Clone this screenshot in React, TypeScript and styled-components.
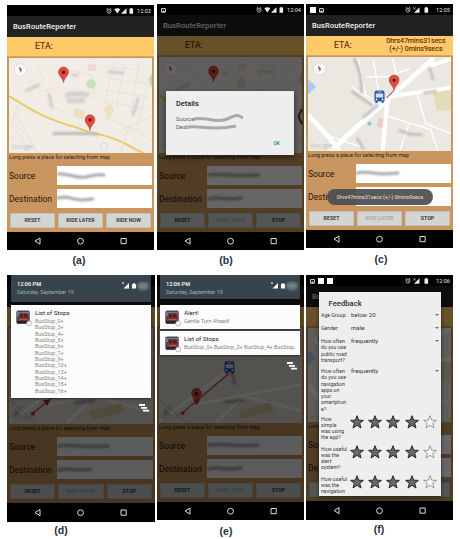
import React from 'react';
import styled, { createGlobalStyle } from 'styled-components';

const GlobalStyle = createGlobalStyle`
  * { box-sizing: border-box; }
  body { margin: 0; background: #fff; font-family: Roboto, "Liberation Sans", sans-serif; }
`;

const Board = styled.main`
  width: 460px;
  height: 539px;
  padding: 4px 0 0 7px;
  display: grid;
  grid-template-columns: 150px 149px 148px;
  grid-template-rows: 271px 264px;
  overflow: hidden;
`;
const Figure = styled.figure<{ $top?: number }>`
  margin: 0;
  padding-top: ${p => p.$top ?? 0}px;
`;
const Caption = styled.figcaption<{ $center: number; $gap: number }>`
  width: ${p => p.$center * 2}px;
  margin-top: ${p => p.$gap}px;
  text-align: center;
  font: bold 10.5px/12px "Liberation Sans", sans-serif;
  color: #26303e;
`;
const Screen = styled.div<{ $h: number; $w?: number }>`
  position: relative;
  display: flex;
  flex-direction: column;
  width: ${p => p.$w ?? 147}px;
  height: ${p => p.$h}px;
  background: #ca965f;
  overflow: hidden;
`;
const StatusBar = styled.div<{ $hidden?: boolean }>`
  height: 11px;
  flex: none;
  display: flex;
  align-items: center;
  gap: 3px;
  padding: 1px 3px 0 4px;
  background: #000;
  color: #e2e2e2;
  font-size: 5.6px;
  & > * { visibility: ${p => (p.$hidden ? 'hidden' : 'visible')}; }
`;
const Spacer = styled.span`flex: 1;`;
const Square = styled.span`width: 6px; height: 6px; background: #fff;`;
const TitleBar = styled.div`
  height: 21px;
  flex: none;
  padding-left: 6px;
  background: #222;
  color: #f2f2f2;
  font-size: 7.5px;
  font-weight: 500;
  line-height: 21px;
  letter-spacing: 0.1px;
`;
const EtaBar = styled.div`
  height: 19.5px;
  flex: none;
  display: flex;
  align-items: center;
  padding-left: 28px;
  background: #ffca67;
  border-bottom: 1px solid #d8a55c;
  color: #6b2b14;
  font-size: 8.8px;
  -webkit-text-stroke: 0.15px #6b2b14;
`;
const EtaValue = styled.div`
  flex: 1;
  padding-left: 27px;
  text-align: center;
  font-size: 7px;
  line-height: 8px;
  white-space: nowrap;
`;
const MapFrame = styled.div`
  flex: 1;
  min-height: 0;
  margin: 1.5px 2px 0;
  overflow: hidden;
  svg { display: block; width: 100%; height: 100%; }
`;
const Hint = styled.div`
  height: 13px;
  flex: none;
  padding: 1px 0 0 2px;
  font-size: 5.4px;
  line-height: 7px;
  white-space: nowrap;
  color: #2a1d12;
`;
const Field = styled.div`
  height: 19px;
  flex: none;
  margin: 0 2px 4px;
  display: grid;
  grid-template-columns: 48px 1fr;
  align-items: center;
  color: #1d1712;
  font-size: 8.5px;
`;
const Input = styled.div`
  height: 19px;
  background: #fff;
  svg { display: block; }
`;
const Buttons = styled.div`
  height: 15px;
  flex: none;
  margin: 1px 3px 4px;
  display: grid;
  grid-template-columns: repeat(3, 1fr);
  gap: 3px;
`;
const Button = styled.div<{ $off?: boolean }>`
  background: #d3d5d5;
  border: 1px solid #c6c1b8;
  border-radius: 1px;
  color: ${p => (p.$off ? '#a3a5a5' : '#222')};
  font-size: 5.3px;
  font-weight: 500;
  line-height: 13px;
  text-align: center;
`;
const NavBar = styled.div<{ $h: number }>`
  height: ${p => p.$h}px;
  flex: none;
  background: #000;
  svg { display: block; height: 100%; }
`;
const NavSvg = styled.svg`fill: none; stroke: #ddd; stroke-width: 1;`;
const Dim = styled.div<{ $bottom: number; $top: number; $alpha: number }>`
  position: absolute;
  inset: ${p => p.$top}px 0 ${p => p.$bottom}px;
  background: rgba(0, 0, 0, ${p => p.$alpha});
`;
const Dialog = styled.div`
  position: absolute;
  top: 87px;
  left: 9px;
  width: 128px;
  height: 64px;
  padding: 8px 10px;
  background: #eee;
  box-shadow: 0 2px 5px rgba(0, 0, 0, 0.5);
  color: #555;
  font-size: 5.8px;
  line-height: 7px;
`;
const DialogTitle = styled.div`
  margin-bottom: 8px;
  color: #222;
  font-size: 7.4px;
  font-weight: 500;
  line-height: 9px;
`;
const DialogRow = styled.div`
  display: flex;
  height: 7.5px;
  svg { display: block; margin-left: -3px; overflow: visible; }
`;
const DialogAction = styled.div`
  padding: 9px 4px 0;
  text-align: right;
  color: #139180;
  font-size: 5px;
  font-weight: 500;
`;
const Drawer = styled.div`
  position: absolute;
  right: 1px;
  top: 104px;
  svg { display: block; }
`;
const Toast = styled.div`
  position: absolute;
  left: 21px;
  top: 185px;
  width: 106px;
  height: 16px;
  border-radius: 8px;
  background: rgba(80, 80, 80, 0.94);
  color: #e4e4e4;
  font-size: 5.3px;
  line-height: 16px;
  text-align: center;
  white-space: nowrap;
`;
const Shade = styled.div<{ $left: number }>`
  position: absolute;
  top: 0;
  left: ${p => p.$left}px;
  width: 140px;
  display: flex;
  flex-direction: column;
`;
const ShadeHead = styled.div<{ $h: number }>`
  height: ${p => p.$h}px;
  margin-bottom: ${p => 30 - p.$h}px;
  padding: 5px 1px 0 6px;
  display: flex;
  justify-content: space-between;
  align-items: flex-start;
  background: #37444c;
  color: #a2acb1;
  font-size: 5.4px;
  line-height: 8px;
  svg { margin-top: 1px; }
`;
const Clock = styled.div`color: #fff; font-size: 5.6px; font-weight: 500;`;
const Card = styled.section<{ $h: number }>`
  height: ${p => p.$h}px;
  margin-bottom: 2px;
  padding: 5px 5px 0;
  display: grid;
  grid-template-columns: 19px 1fr;
  background: #fcfcfc;
  box-shadow: 0 1px 2px rgba(0, 0, 0, 0.5);
`;
const CardTitle = styled.div`
  margin-bottom: 1px;
  color: #222;
  font-size: 6.2px;
  line-height: 7px;
`;
const CardText = styled.div`
  color: #858585;
  font-size: 5.4px;
  line-height: 6.35px;
  white-space: nowrap;
`;
const ClearAll = styled.div<{ $top: number; $left: number }>`
  position: absolute;
  top: ${p => p.$top}px;
  left: ${p => p.$left}px;
  svg { display: block; }
`;
const Feedback = styled.div`
  position: absolute;
  left: 13px;
  top: 17px;
  width: 122px;
  height: 204px;
  padding: 6px 2px 0;
  background: #eee;
  box-shadow: 0 1px 4px rgba(0, 0, 0, 0.6);
  overflow: hidden;
`;
const FeedbackTitle = styled.h2`
  margin: 0 0 2px 7.5px;
  color: #2d2d2d;
  font-size: 7.7px;
  font-weight: 500;
  line-height: 12px;
`;
const Question = styled.div<{ $h: number }>`
  height: ${p => p.$h}px;
  display: grid;
  grid-template-columns: 30px 80px 1fr;
  color: #3a3a3a;
  font-size: 5.2px;
  line-height: 6.3px;
  white-space: nowrap;
`;
const Rating = styled.div`
  grid-column: 2 / 4;
  display: flex;
  gap: 4.2px;
  margin: -1px 0 0 -1px;
`;
const Answer = styled.div`color: #333; font-size: 6.1px;`;
const Caret = styled.div`
  width: 0;
  height: 0;
  margin: 2px 0 0 4px;
  border: 2px solid transparent;
  border-top: 2.5px solid #6d6d6d;
`;
const Soft = styled.g`filter: blur(0.8px);`;
const Haze = styled.g`filter: blur(1.1px);`;

const Smudge = ({ v = 0 }: { v?: number }) => (
  <svg width="94" height="19">
    <Soft fill="none" stroke="#a8a8a8" strokeLinecap="round">
      {v === 0 && <path d="M1 8C14 7 18 13 29 11S40 8 47 9" strokeWidth="3" />}
      {v === 1 && <path d="M1 9C12 6 17 12 26 11S32 10 36 10" strokeWidth="3" />}
      {v === 2 && <path d="M2 9C17 7 30 11 51 9" strokeWidth="3.5" />}
      {v === 3 && <path d="M2 10C12 7 20 12 34 9" strokeWidth="3.5" />}
      {v === 4 && <path d="M1 9C15 6 20 12 42 9" strokeWidth="3" />}
    </Soft>
  </svg>
);

const SignalIcons = ({ wifi = true }: { wifi?: boolean }) => (
  <svg width="29" height="8" viewBox="0 0 29 8">
    <circle cx="4" cy="4.2" r="2" fill="none" stroke="#ccc" strokeWidth=".8" />
    <path d="M1.5 2.3 3 1M5 1l1.5 1.3M4 3v1.4h1" fill="none" stroke="#ccc" strokeWidth=".7" />
    {wifi ? <path d="M9.3 2.2q3-2 6 0l-3 4.2z" fill="#eee" /> : <path d="M9.5 1.4l2 2m0-2-2 2" stroke="#ddd" strokeWidth=".8" />}
    <path d={wifi ? 'M21.5 1.2v5.5H16z' : 'M15.5 1.2v5.5H10z'} fill="#eee" />
    <path d={wifi ? 'M24.5 1.8h1V1h1.6v.8h1v5h-3.6z' : 'M20.5 1.8h1V1h1.6v.8h1v5h-3.6z'} fill="#eee" />
  </svg>
);
const Picture = () => (
  <svg width="5" height="5"><path d="M.6.6h3.8v3.6H.6z" fill="none" stroke="#ddd" /><path d="M1 4 2.5 2.3 4 4z" fill="#ddd" /></svg>
);
const Pin = ({ x, y }: { x: number; y: number }) => (
  <g transform={`translate(${x} ${y})`}>
    <path d="M0 0C-.4-5-5-7-5-11A5 5 0 0 1 5-11C5-7 .4-5 0 0Z" fill="#e04b3f" stroke="#b83b31" strokeWidth=".5" />
    <circle cy="-10.8" r="1.7" fill="#5a1512" />
  </g>
);
const Bus = ({ x, y }: { x: number; y: number }) => (
  <g transform={`translate(${x} ${y})`}>
    <path d="M-5-4Q-5-6.3-2.5-6.3h5Q5-6.3 5-4V4.6H4V6.3H2V4.6h-4v1.7h-2V4.6h-1z" fill="#2456a8" />
    <path d="M-3.7-3.4h7.4V.7h-7.4zM-2-5.3h4v.8h-4z" fill="#d6e2f2" />
    <circle cx="-3" cy="2.7" r=".9" fill="#fff" /><circle cx="3" cy="2.7" r=".9" fill="#fff" />
  </g>
);
const Compass = () => (
  <g>
    <circle cx="11.5" cy="12" r="6.3" fill="#faf9f7" stroke="#d5d0ca" strokeWidth=".7" />
    <path d="M10.2 9.5 12.8 12 11.8 15z" fill="#777" /><path d="M10.2 8.5 13 11.6 10.5 12.5z" fill="#c9473f" />
  </g>
);
const Google = () => (
  <text x="2" y="91" fontSize="7" fill="#fff" stroke="#aaa" strokeWidth=".25" fontFamily="Roboto, sans-serif">Google</text>
);

const WideMap = () => (
  <svg viewBox="0 0 143 95.5" preserveAspectRatio="none">
    <rect width="143" height="96" fill="#f1ece5" />
    <g stroke="#dedbd7" strokeWidth=".6" fill="none">
      <path d="M0 63 22 95M4 52l11 18 13 25M0 78l30 17M10 46l-7 18 12 10M95 8l34 4 14 12M100 20l38 6M96 32l43 7M92 43l48 9M104 4 96 46M116 7l-9 42M130 5l-8 49M140 22l-13 52M95 60l24 9 24-10M100 82l20-14 23 16M112 95l8-26 13 26M28 7l8 17M20 24l12 9 20-4M36 45l18 9M58 12l24 5 4 22" />
    </g>
    <path d="M66 50l11 3-3 9-10-3zM94 51l7-6 4 7-5 9z" fill="#eee0c2" />
    <path d="M79 6h8v7h-8z" fill="#eed8d3" />
    <circle cx="82" cy="26" r="4.8" fill="#c9e2bd" /><path d="M143 15q-5 7 0 15z" fill="#b7d9a8" />
    <path d="M0 38Q30 58 52 65T79 74Q103 79 116 86T135 96" fill="none" stroke="#e9cb64" strokeWidth="2" />
    <Haze stroke="#b9b9b6" strokeLinecap="round">
      <path d="M58 37q9-2 20 0M60 43h14" strokeWidth="5" opacity=".55" fill="none" />
      <path d="M43 49l-3-12M124 57l5-16M17 33l13-6M99 14l15 1M64 17h4" strokeWidth="2.5" opacity=".7" />
      <path d="M45 76h36l7 1" strokeWidth="3" fill="none" />
    </Haze>
    <circle cx="95" cy="89" r="4" fill="none" stroke="#c6c3c0" strokeWidth=".5" />
    <Compass /><Google /><Pin x={54.5} y={25} /><Pin x={81} y={73} />
  </svg>
);
const CloseMap = () => (
  <svg viewBox="0 0 142 94.5" preserveAspectRatio="none">
    <rect width="142" height="95" fill="#ebe8e1" />
    <path d="M0 22l8 8-8 8z" fill="#abc9f3" />
    <path d="M124 36l18-3v21h-14z" fill="#e4dcb8" /><path d="M70 61l8 2-2 9-8-2z" fill="#e7cfca" />
    <g stroke="#fff" fill="none">
      <path d="M22 95 50 69 123 3V0M0 58 22 82 31 95" strokeWidth="5" />
      <path d="M78 40 142 31M119 10l23-8M79 42 74 95" strokeWidth="4" />
      <path d="M50 2 57 38l15 10M44 30l22 18M57 20h20l24-8M65 3l5 32M84 1l4 18M109 39l8 28 25 10M80 60l42 13 7 22M100 68l-9 27M17 78l35 12" strokeWidth="1.3" />
    </g>
    <Haze stroke="#aaa7a2" strokeLinecap="round" fill="none">
      <path d="M46 2q8 16 7 33M44 35l19 13M121 11l3 11M115 36l12-2M91 74q12 5 22 4M49 82l6 10M55 61l14-12" strokeWidth="2.4" opacity=".75" />
    </Haze>
    <circle cx="61" cy="67" r="2" fill="#84c5dc" />
    <path d="M85 34 78 41" stroke="#b44b54" />
    <Compass /><Google /><Pin x={85.5} y={34} /><Bus x={71} y={40} />
  </svg>
);
const RouteMap = ({ right = false }: { right?: boolean }) => (
  <svg viewBox="0 0 143 96" preserveAspectRatio="none">
    <rect width="143" height="96" fill="#e5e2db" />
    <g stroke="#f8f8f8" strokeWidth="3" fill="none">
      <path d="M0 95 37 67 77 37M37 77 143 57M57 95 85 69 143 84" />
      <path d="M0 50l30 30 40 15M98 27l-9 46M103 30v30M118 29l5 28M90 43l52 8M15 35l22 35" strokeWidth="1" opacity=".6" />
    </g>
    <path d="M80 83l31-8 4 9-33 8z" fill="#dcce9f" />
    <path d="M0 72l27 23M6 80v12M13 77l-9 15" stroke="#aaa69f" strokeWidth=".7" />
    <Haze stroke="#9c9993" strokeWidth="2.5"><path d="M65 75l20-2M73 45l3 12M6 84l4 5" /></Haze>
    <path d="M70 46 23 86" stroke="#c72f59" strokeWidth="1.1" /><circle cx="23.5" cy="86" r="2" fill="#d7194a" />
    <path d="M34 72h7l-3 6z" fill="#b71e3b" />
    <Google />
    {right && <><Pin x={37.5} y={77} /><Bus x={70.5} y={40} /></>}
  </svg>
);

const NavIcons = () => (
  <NavSvg viewBox="0 0 147 18" preserveAspectRatio="xMidYMid meet" width="147">
    <path d="M28 9 33 6v6.2zM114 6.5h5.2v5.2H114z" /><circle cx="73.5" cy="9.2" r="2.9" />
  </NavSvg>
);

type PhoneProps = {
  h: number; w?: number; nav?: number; time: string; map: React.ReactNode;
  active?: boolean; value?: React.ReactNode; icons?: React.ReactNode; wifi?: boolean;
  noStatus?: boolean; smudges?: [number, number]; children?: React.ReactNode;
};
const Phone = ({ h, w, nav = 18, time, map, active, value, icons, wifi, noStatus, smudges = [0, 1], children }: PhoneProps) => (
  <Screen $h={h} $w={w}>
    <StatusBar $hidden={noStatus}>{icons}<Spacer />{!noStatus && <><SignalIcons wifi={wifi} />{time}</>}</StatusBar>
    <TitleBar>{!noStatus && 'BusRouteReporter'}</TitleBar>
    <EtaBar>{!noStatus && 'ETA:'}{value && <EtaValue>{value}</EtaValue>}</EtaBar>
    <MapFrame>{map}</MapFrame>
    <Hint>Long press a place for selecting from map</Hint>
    <Field>Source<Input><Smudge v={smudges[0]} /></Input></Field>
    <Field>Destination<Input><Smudge v={smudges[1]} /></Input></Field>
    <Buttons>
      <Button>RESET</Button>
      <Button $off={active}>RIDE LATER</Button>
      <Button>{active ? 'STOP' : 'RIDE NOW'}</Button>
    </Buttons>
    <NavBar $h={nav}><NavIcons /></NavBar>
    {children}
  </Screen>
);

const ShadeBlur = styled.ellipse`filter: blur(1.4px);`;
const ShadeSignal = () => (
  <svg width="29" height="11" viewBox="0 0 29 11">
    <path d="M1 1l2 2m0-2L1 3" stroke="#ddd" strokeWidth=".7" /><path d="M8 2v5.5H2.5zM11 3h1v-.8h2V3h1v4.5h-4z" fill="#fff" />
    <ShadeBlur cx="22" cy="5" rx="6" ry="4" fill="#728087" />
  </svg>
);
const BusPhoto = () => (
  <svg width="17" height="17" viewBox="0 0 17 17">
    <rect x=".3" y=".5" width="13.5" height="13.5" rx="2" fill="#424b57" />
    <path d="M1 2h12v4H1z" fill="#71808c" /><rect x="3" y="3" width="9.5" height="9" rx="1" fill="#8c2c2d" />
    <path d="M4 4.2h3v3H4zM8 4.2h3.5v3H8z" fill="#302b35" /><path d="M3.5 9h8v1h-8z" fill="#b9584e" />
    <path d="M1 12h12" stroke="#20262f" strokeWidth="2" /><circle cx="13.2" cy="13.4" r="2.5" fill="#fff" stroke="#999" strokeWidth=".7" />
  </svg>
);
const ClearIcon = () => (
  <svg width="10" height="8"><path d="M0 1h6M2 3.8h6M4 6.6h6" stroke="#fff" strokeWidth="1.8" /></svg>
);
const Star = ({ on }: { on: boolean }) => (
  <svg width="14" height="14" viewBox="0 0 14 14">
    <path d="M7 .7 8.7 5.2 13.4 5.4 9.7 8.3 11 13 7 10.3 3 13 4.3 8.3.6 5.4 5.3 5.2Z" fill={on ? '#696969' : '#f5f5f5'} stroke={on ? '#262626' : '#777'} strokeWidth={on ? 1 : 0.7} />
  </svg>
);
const Stars = () => <Rating>{[0, 1, 2, 3, 4].map(i => <Star key={i} on={i < 4} />)}</Rating>;
const Lines = ({ items }: { items: string[] }) => <div>{items.map(t => <div key={t}>{t}</div>)}</div>;
const ShadeTop = ({ h }: { h: number }) => (
  <ShadeHead $h={h}><div><Clock>12:06 PM</Clock>Saturday, September 19</div><ShadeSignal /></ShadeHead>
);
const Scribble = styled.path`
  fill: none;
  stroke: #aaa;
  stroke-width: 3;
  filter: blur(0.6px);
`;

const stops = [0, 3, 4, 5, 6, 7, 9, 10, 13, 14, 15, 16];
const dropdowns = [
  { h: 13, label: ['Age Group:'], answer: 'below 20' },
  { h: 13, label: ['Gender:'], answer: 'male' },
  { h: 30, label: ['How often', 'do you use', 'public road', 'transport?'], answer: 'frequently' },
  { h: 47.5, label: ['How often', 'do you use', 'navigation', 'apps on', 'your', 'smartphon', 'e?'], answer: 'frequently' },
];
const ratings = [
  ['How', 'simple', 'was using', 'the app?'],
  ['How useful', 'was the', 'alert', 'system?'],
  ['How useful', 'was the', 'navigation'],
];

export default function App() {
  return (
    <>
      <GlobalStyle />
      <Board>
        <Figure $top={1}>
          <Phone h={245} time="12:03" map={<WideMap />} />
          <Caption $center={72} $gap={4}>(a)</Caption>
        </Figure>
        <Figure>
          <Phone h={246} time="12:04" map={<WideMap />} active icons={<Picture />} smudges={[2, 3]}>
            <Dim $top={11} $bottom={18} $alpha={0.6} />
            <Drawer><svg width="6" height="17"><path d="M5 1 1.5 8.5 5 16" fill="none" stroke="#1c1c1c" strokeWidth="2" /></svg></Drawer>
            <Dialog>
              <DialogTitle>Details</DialogTitle>
              <DialogRow>Source:<svg width="54" height="7"><Scribble d="M2 3C15 0 23 8 35 3S45-1 51 2" /></svg></DialogRow>
              <DialogRow>Dest:<svg width="54" height="7"><Scribble d="M2 3C13 1 25 7 50 2" /></svg></DialogRow>
              <DialogAction>OK</DialogAction>
            </Dialog>
          </Phone>
          <Caption $center={69} $gap={4}>(b)</Caption>
        </Figure>
        <Figure>
          <Phone h={244} time="12:05" map={<CloseMap />} active wifi={false} icons={<><Square /><Picture /></>} smudges={[4, 1]}
            value={<>0hrs47mins31secs<br />(+/-) 0mins9secs</>}>
            <Toast>0hrs47mins31secs (+/-) 0mins9secs</Toast>
          </Phone>
          <Caption $center={75} $gap={5}>(c)</Caption>
        </Figure>
        <Figure>
          <Phone h={247} w={148} nav={19} time="12:06" map={<RouteMap />} active noStatus smudges={[2, 3]}>
            <Dim $top={0} $bottom={19} $alpha={0.64} />
            <Shade $left={4}>
              <ShadeTop h={27} />
              <Card $h={93}>
                <BusPhoto />
                <div><CardTitle>List of Stops</CardTitle><CardText>{stops.map(n => <div key={n}>BusStop_{n}+</div>)}</CardText></div>
              </Card>
            </Shade>
            <ClearAll $top={129} $left={132}><ClearIcon /></ClearAll>
          </Phone>
          <Caption $center={54} $gap={2}>(d)</Caption>
        </Figure>
        <Figure>
          <Phone h={245} time="12:06" map={<RouteMap right />} active noStatus smudges={[2, 3]}>
            <Dim $top={0} $bottom={18} $alpha={0.64} />
            <Shade $left={3}>
              <ShadeTop h={24} />
              <Card $h={24}><BusPhoto /><div><CardTitle>Alert!</CardTitle><CardText>Gentle Turn Ahead!</CardText></div></Card>
              <Card $h={24}><BusPhoto /><div><CardTitle>List of Stops</CardTitle><CardText>BusStop_0+ BusStop_3+ BusStop_4+ BusStop.</CardText></div></Card>
            </Shade>
            <ClearAll $top={87} $left={130}><ClearIcon /></ClearAll>
          </Phone>
          <Caption $center={69} $gap={5}>(e)</Caption>
        </Figure>
        <Figure>
          <Phone h={245} nav={19} time="12:06" map={<CloseMap />} active wifi={false} icons={<><Picture /><Square /><Square /></>}>
            <Dim $top={11} $bottom={19} $alpha={0.6} />
            <Feedback>
              <FeedbackTitle>Feedback</FeedbackTitle>
              {dropdowns.map((q, i) => (
                <Question key={i} $h={q.h}><Lines items={q.label} /><Answer>{q.answer}</Answer><Caret /></Question>
              ))}
              {ratings.map((q, i) => <Question key={i} $h={30}><Lines items={q} /><Stars /></Question>)}
            </Feedback>
          </Phone>
          <Caption $center={73} $gap={3}>(f)</Caption>
        </Figure>
      </Board>
    </>
  );
}
